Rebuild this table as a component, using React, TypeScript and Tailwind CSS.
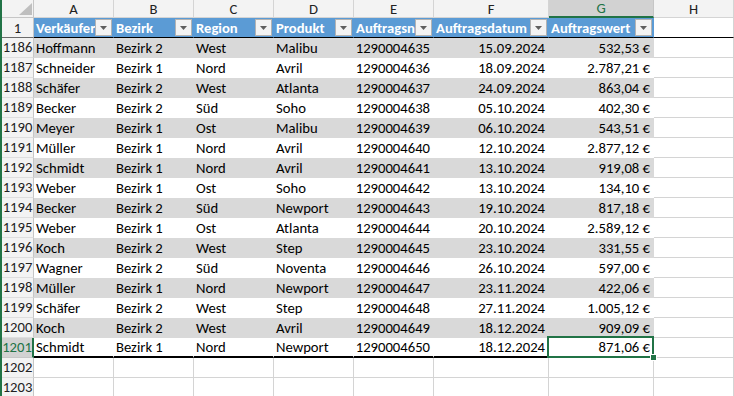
const FONT = "font-['Calibri','Carlito','Liberation_Sans',sans-serif]";

const COLS = [
  { key: 'A', w: 'w-[80px]' },
  { key: 'B', w: 'w-[80px]' },
  { key: 'C', w: 'w-[80px]' },
  { key: 'D', w: 'w-[80px]' },
  { key: 'E', w: 'w-[80px]' },
  { key: 'F', w: 'w-[115px]' },
  { key: 'G', w: 'w-[105px]' },
  { key: 'H', w: 'w-[80px]' },
];

const HEADERS = ['Verkäufer', 'Bezirk', 'Region', 'Produkt', 'Auftragsnummer', 'Auftragsdatum', 'Auftragswert'];

const ROWS: string[][] = [
  ['Hoffmann', 'Bezirk 2', 'West', 'Malibu', '1290004635', '15.09.2024', '532,53 €'],
  ['Schneider', 'Bezirk 1', 'Nord', 'Avril', '1290004636', '18.09.2024', '2.787,21 €'],
  ['Schäfer', 'Bezirk 2', 'West', 'Atlanta', '1290004637', '24.09.2024', '863,04 €'],
  ['Becker', 'Bezirk 2', 'Süd', 'Soho', '1290004638', '05.10.2024', '402,30 €'],
  ['Meyer', 'Bezirk 1', 'Ost', 'Malibu', '1290004639', '06.10.2024', '543,51 €'],
  ['Müller', 'Bezirk 1', 'Nord', 'Avril', '1290004640', '12.10.2024', '2.877,12 €'],
  ['Schmidt', 'Bezirk 1', 'Nord', 'Avril', '1290004641', '13.10.2024', '919,08 €'],
  ['Weber', 'Bezirk 1', 'Ost', 'Soho', '1290004642', '13.10.2024', '134,10 €'],
  ['Becker', 'Bezirk 2', 'Süd', 'Newport', '1290004643', '19.10.2024', '817,18 €'],
  ['Weber', 'Bezirk 1', 'Ost', 'Atlanta', '1290004644', '20.10.2024', '2.589,12 €'],
  ['Koch', 'Bezirk 2', 'West', 'Step', '1290004645', '23.10.2024', '331,55 €'],
  ['Wagner', 'Bezirk 2', 'Süd', 'Noventa', '1290004646', '26.10.2024', '597,00 €'],
  ['Müller', 'Bezirk 1', 'Nord', 'Newport', '1290004647', '23.11.2024', '422,06 €'],
  ['Schäfer', 'Bezirk 2', 'West', 'Step', '1290004648', '27.11.2024', '1.005,12 €'],
  ['Koch', 'Bezirk 2', 'West', 'Avril', '1290004649', '18.12.2024', '909,09 €'],
  ['Schmidt', 'Bezirk 1', 'Nord', 'Newport', '1290004650', '18.12.2024', '871,06 €'],
];

function FilterButton() {
  return (
    <div className="w-[17px] h-[17px] mr-[1px] shrink-0 bg-[#f3f3f3] border border-[#b3b3b3] flex items-center justify-center">
      <svg width="7" height="4" viewBox="0 0 7 4">
        <polygon points="0,0 7,0 3.5,4" fill="#5f5f5f" />
      </svg>
    </div>
  );
}

function RowHead({ n, active }: { n: number; active?: boolean }) {
  return (
    <div
      className={
        active
          ? 'w-[32px] shrink-0 h-full flex items-center justify-center bg-[#d2d2d2] text-[#217346] border-r-2 border-r-[#217346] border-b border-b-[#c6c6c6]'
          : 'w-[32px] shrink-0 h-full flex items-center justify-center bg-[#f3f3f3] text-[#222] border-r border-r-[#c6c6c6] border-b border-b-[#dedede]'
      }
    >
      {n}
    </div>
  );
}

export default function App() {
  return (
    <div className={`flex w-[734px] h-[396px] overflow-hidden bg-white text-[14.67px] leading-none text-black ${FONT}`}>
      <div className="w-[2px] shrink-0 bg-[#217346]" />
      <div className="flex flex-col flex-1">
        {/* column letters */}
        <div className="flex h-[18px] shrink-0">
          <div className="w-[32px] shrink-0 h-full bg-[#f3f3f3] border-r border-b border-[#c6c6c6] flex items-end justify-end pr-[1px] pb-[2px]">
            <svg width="13" height="12" viewBox="0 0 13 12">
              <polygon points="13,0 13,12 0,12" fill="#bfbfbf" />
            </svg>
          </div>
          {COLS.map((c) =>
            c.key === 'G' ? (
              <div key={c.key} className={`${c.w} shrink-0 h-full flex items-center justify-center pt-[1px] bg-[#d2d2d2] text-[#217346] border-r border-r-[#c6c6c6] border-b-2 border-b-[#217346]`}>
                {c.key}
              </div>
            ) : (
              <div key={c.key} className={`${c.w} shrink-0 h-full flex items-center justify-center pt-[1px] bg-[#f3f3f3] text-[#222] border-r border-b border-[#d4d4d4]`}>
                {c.key}
              </div>
            )
          )}
        </div>

        {/* table header row (frozen) */}
        <div className="flex h-[20px] shrink-0">
          <div className="w-[32px] shrink-0 h-full flex items-center justify-center pt-[1px] bg-[#f3f3f3] text-[#222] border-r border-r-[#c6c6c6] border-b border-b-[#6b6b6b]">
            1
          </div>
          {HEADERS.map((h, i) => (
            <div key={h} className={`${COLS[i].w} shrink-0 h-full flex items-center bg-[#5b9bd5] border-r border-r-[#5b9bd5] border-b border-b-black`}>
              <span className="flex-1 min-w-0 overflow-hidden whitespace-nowrap pl-[2px] pt-[1px] font-bold text-white">{h}</span>
              <FilterButton />
            </div>
          ))}
          <div className="w-[80px] shrink-0 h-full border-r border-r-[#d4d4d4] border-b border-b-black" />
        </div>

        {/* data rows */}
        {ROWS.map((r, idx) => {
          const n = 1186 + idx;
          const last = idx === ROWS.length - 1;
          const gray = idx % 2 === 0;
          const fill = gray ? 'bg-[#d9d9d9] border-r-[#d9d9d9]' : 'bg-white border-r-white';
          const bottom = last ? 'border-b-2 border-b-black' : gray ? 'border-b border-b-[#d9d9d9]' : 'border-b border-b-white';
          return (
            <div key={n} className="flex h-[20px] shrink-0">
              <RowHead n={n} active={last} />
              {r.map((v, i) => {
                const right = i >= 4;
                const borderR = i === 6 ? 'border-r-[#d4d4d4]' : '';
                return (
                  <div
                    key={i}
                    className={`${COLS[i].w} shrink-0 h-full flex items-center pt-[1px] whitespace-nowrap overflow-visible border-r ${fill} ${borderR} ${bottom} ${
                      right ? 'justify-end pr-[3px]' : 'pl-[2px]'
                    } ${last && i === 6 ? 'relative z-10' : ''}`}
                  >
                    {v}
                    {last && i === 6 && (
                      <>
                        <div className="absolute left-[-2px] top-[-2px] right-[-1px] bottom-[-2px] border-2 border-[#217346]" />
                        <div className="absolute right-[-4px] bottom-[-5px] w-[7px] h-[7px] bg-[#217346] border border-white" />
                      </>
                    )}
                  </div>
                );
              })}
              <div className="w-[80px] shrink-0 h-full border-r border-b border-[#d4d4d4]" />
            </div>
          );
        })}

        {/* empty rows */}
        {[1202, 1203].map((n) => (
          <div key={n} className="flex h-[20px] shrink-0">
            <RowHead n={n} />
            {COLS.map((c) => (
              <div key={c.key} className={`${c.w} shrink-0 h-full border-r border-b border-[#d4d4d4]`} />
            ))}
          </div>
        ))}
      </div>
    </div>
  );
}
